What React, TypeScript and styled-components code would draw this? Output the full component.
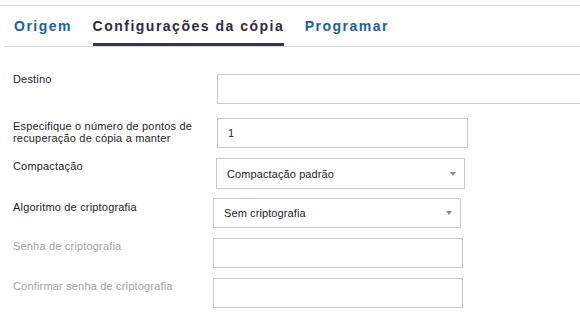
import React from 'react'
import styled, { createGlobalStyle } from 'styled-components'

const GlobalStyle = createGlobalStyle`
  body {
    margin: 0;
    background: #ffffff;
    font-family: "Liberation Sans", Arial, sans-serif;
    overflow: hidden;
  }
`

const Page = styled.div`
  width: 580px;
  height: 316px;
  padding-top: 5px;
  box-sizing: border-box;
  background: #ffffff;
`

const TopRule = styled.div`
  height: 1px;
  background: #d4d7dc;
`

const TabBar = styled.div`
  display: flex;
  gap: 22px;
  margin-left: 4px;
  padding-left: 10px;
  height: 40px;
  border-bottom: 1px solid #d4d7dc;
`

const Tab = styled.div<{ $active?: boolean }>`
  box-sizing: border-box;
  height: 40px;
  padding-top: 12px;
  margin-right: -1.5px;
  font-size: 14px;
  line-height: 16px;
  font-weight: bold;
  letter-spacing: 1.5px;
  white-space: nowrap;
  color: ${p => (p.$active ? '#2e2b40' : '#1a5ea6')};
  border-bottom: 3px solid ${p => (p.$active ? '#3b3550' : 'transparent')};
`

const Form = styled.div`
  display: flex;
  flex-direction: column;
  padding: 27px 0 0 13px;
`

const Row = styled.div<{ $top: number }>`
  display: flex;
  align-items: flex-start;
  margin-top: ${p => p.$top}px;
`

const Label = styled.div<{ $width: number; $offset: number; $muted?: boolean }>`
  width: ${p => p.$width}px;
  flex: none;
  margin-top: ${p => p.$offset}px;
  font-size: 11px;
  line-height: 12px;
  letter-spacing: 0.18px;
  color: ${p => (p.$muted ? '#a3a3a3' : '#1e1e1e')};
`

const Field = styled.div<{ $width: number; $height?: number }>`
  width: ${p => p.$width}px;
  height: ${p => p.$height ?? 30}px;
  box-sizing: border-box;
  border: 1px solid #c9c9c9;
  background: #ffffff;
  display: flex;
  align-items: center;
  padding: 0 8px 0 10px;
  font-size: 11px;
  letter-spacing: 0.1px;
  color: #1e1e1e;
  flex: none;
`

const Value = styled.span`
  flex: 1;
  white-space: nowrap;
`

const Caret = styled.span`
  width: 0;
  height: 0;
  border-left: 3.5px solid transparent;
  border-right: 3.5px solid transparent;
  border-top: 4px solid #878d96;
`

const App: React.FC = () => {
  return (
    <>
      <GlobalStyle />
      <Page>
        <TopRule />
        <TabBar>
          <Tab>Origem</Tab>
          <Tab $active>Configurações da cópia</Tab>
          <Tab>Programar</Tab>
        </TabBar>
        <Form>
          <Row $top={0}>
            <Label $width={204} $offset={-1}>Destino</Label>
            <Field $width={380} />
          </Row>
          <Row $top={14}>
            <Label $width={204} $offset={2}>
              Especifique o número de pontos de
              <br />
              recuperação de cópia a manter
            </Label>
            <Field $width={251}>
              <Value>1</Value>
            </Field>
          </Row>
          <Row $top={10}>
            <Label $width={203} $offset={2}>Compactação</Label>
            <Field $width={249} $height={31}>
              <Value>Compactação padrão</Value>
              <Caret />
            </Field>
          </Row>
          <Row $top={9}>
            <Label $width={200} $offset={3}>Algoritmo de criptografia</Label>
            <Field $width={248}>
              <Value>Sem criptografia</Value>
              <Caret />
            </Field>
          </Row>
          <Row $top={10}>
            <Label $width={200} $offset={2} $muted>Senha de criptografia</Label>
            <Field $width={250} />
          </Row>
          <Row $top={10}>
            <Label $width={200} $offset={2} $muted>Confirmar senha de criptografia</Label>
            <Field $width={250} />
          </Row>
        </Form>
      </Page>
    </>
  )
}

export default App
